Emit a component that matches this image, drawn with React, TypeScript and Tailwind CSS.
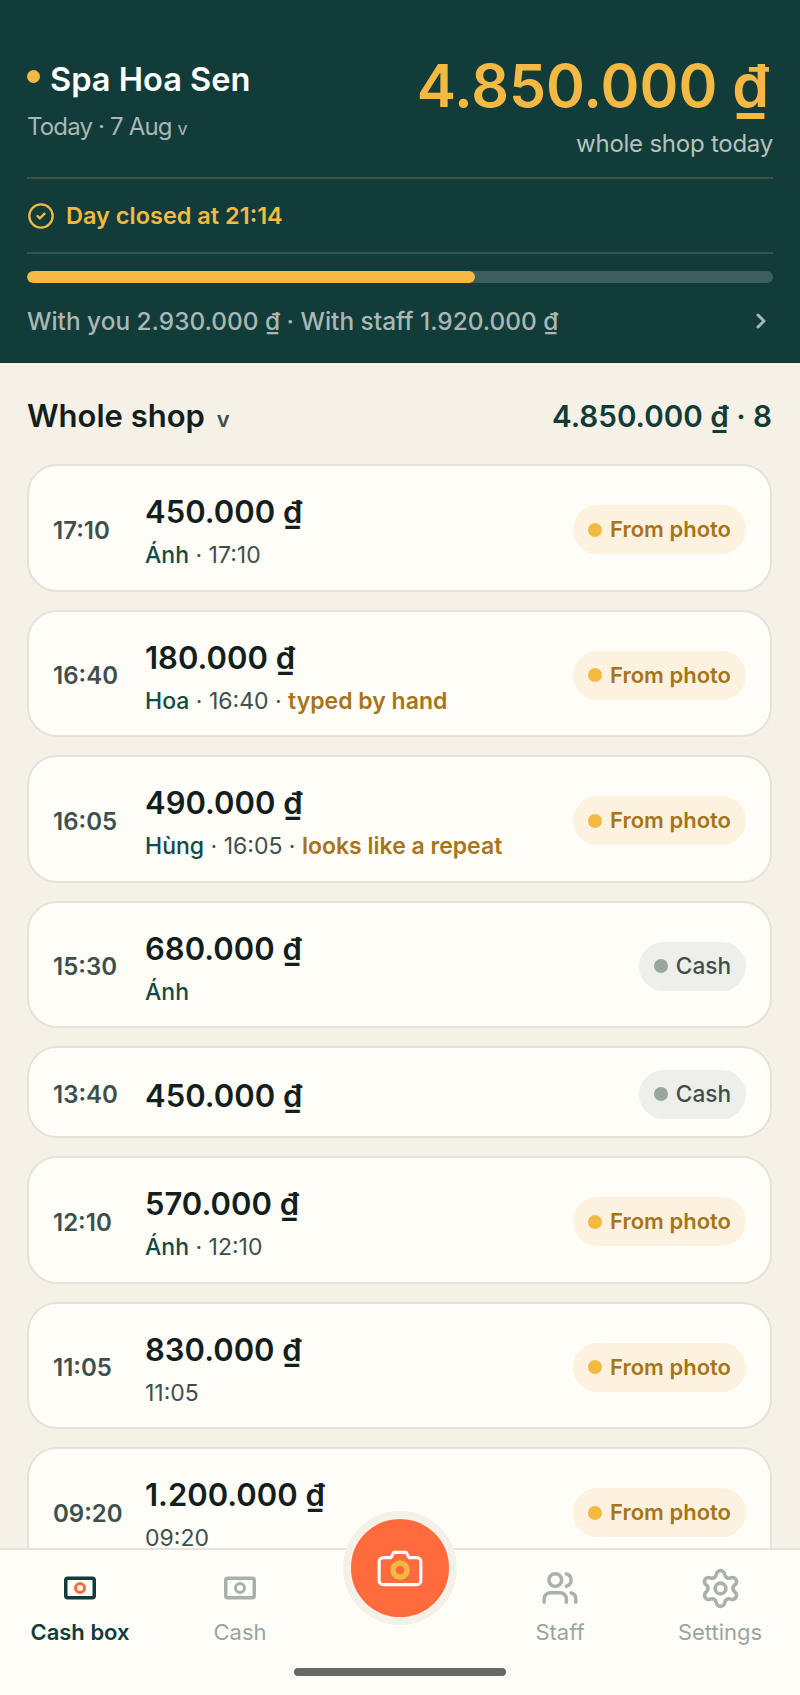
import { ChevronRight, Settings, Users, CircleCheck } from "lucide-react";

interface Sale {
  time: string;
  amount: string;
  who?: string;
  at?: string;
  note?: string;
  kind: "photo" | "cash";
}

const SALES: Sale[] = [
  { time: "17:10", amount: "450.000", who: "Ánh", at: "17:10", kind: "photo" },
  { time: "16:40", amount: "180.000", who: "Hoa", at: "16:40", note: "typed by hand", kind: "photo" },
  { time: "16:05", amount: "490.000", who: "Hùng", at: "16:05", note: "looks like a repeat", kind: "photo" },
  { time: "15:30", amount: "680.000", who: "Ánh", kind: "cash" },
  { time: "13:40", amount: "450.000", kind: "cash" },
  { time: "12:10", amount: "570.000", who: "Ánh", at: "12:10", kind: "photo" },
  { time: "11:05", amount: "830.000", at: "11:05", kind: "photo" },
  { time: "09:20", amount: "1.200.000", at: "09:20", kind: "photo" },
];

function Pill({ kind }: { kind: Sale["kind"] }) {
  if (kind === "cash") {
    return (
      <span className="mt-[4px] flex h-[49px] items-center gap-[8px] rounded-full bg-[#eeeeea] px-[15px] text-[22.6px] font-medium text-[#3e4f4c]">
        <span className="h-[14px] w-[14px] rounded-full bg-[#99a5a1]" />
        Cash
      </span>
    );
  }
  return (
    <span className="mt-[4px] flex h-[49px] items-center gap-[8px] rounded-full bg-[#fdf2df] px-[15px] text-[22px] font-semibold text-[#a8741a]">
      <span className="h-[14px] w-[14px] rounded-full bg-[#f4b942]" />
      From photo
    </span>
  );
}

function SaleCard({ sale }: { sale: Sale }) {
  const hasSub = sale.who || sale.at;
  return (
    <div
      className={`flex shrink-0 items-center justify-between rounded-[30px] border-2 border-[#e4e2da] bg-[#fffdf8] px-[24px] ${
        hasSub ? "h-[127.5px]" : "h-[92px]"
      }`}
    >
      <div className="flex items-center">
        <span className="w-[92px] pt-[6px] text-[24px] font-semibold text-[#3e4f4c]">{sale.time}</span>
        <div className="flex flex-col pt-[8px]">
          <span className="text-[31px] font-semibold leading-[40px] text-[#141e1c]">{sale.amount} ₫</span>
          {hasSub && (
            <span className="mt-[7px] text-[23px] leading-[32px] text-[#3e4f4c]">
              {sale.who && <span className="font-medium text-[#134a45]">{sale.who}</span>}
              {sale.who && sale.at && " · "}
              {sale.at}
              {sale.note && " · "}
              {sale.note && <span className="font-semibold text-[#a8741a]">{sale.note}</span>}
            </span>
          )}
        </div>
      </div>
      <Pill kind={sale.kind} />
    </div>
  );
}

function NoteIcon({ lens, line }: { lens: string; line: string }) {
  return (
    <svg width="36" height="26" viewBox="0 0 36 26" fill="none">
      <rect x="3.75" y="3.25" width="28.5" height="19.5" rx="2" stroke={line} strokeWidth="3.5" />
      <circle cx="18" cy="13" r="4.5" stroke={lens} strokeWidth="3" />
    </svg>
  );
}

function Tab({ label, active, children }: { label: string; active?: boolean; children: React.ReactNode }) {
  return (
    <div className="flex flex-1 flex-col items-center">
      <div className="flex h-[40px] items-center justify-center">{children}</div>
      <span
        className={`mt-[9px] text-[22px] leading-[30px] ${
          active ? "font-semibold text-[#123c3a]" : "text-[#9aa5a1]"
        }`}
      >
        {label}
      </span>
    </div>
  );
}

export default function App() {
  return (
    <div className="relative flex h-[1695px] w-[800px] flex-col overflow-hidden bg-[#f6f1e7] font-['Inter',sans-serif]">
      <header className="shrink-0 bg-[#123c3a] pl-[27px] pr-[27px] pt-[52px]">
        <div className="flex items-start justify-between">
          <div>
            <div className="flex items-center gap-[10px] pt-[7px]">
              <span className="mb-[6px] h-[13px] w-[13px] rounded-full bg-[#f4b942]" />
              <span className="text-[32.6px] font-semibold leading-[40px] text-white">Spa Hoa Sen</span>
            </div>
            <div className="mt-[11px] text-[24px] leading-[34px] tracking-[-0.035em] text-[#a9b8b4]">
              Today · 7 Aug <span className="text-[18px]">v</span>
            </div>
          </div>
          <div className="text-right">
            <div className="mr-[4px] text-[59px] font-semibold leading-[68px] text-[#f4b942]">4.850.000 ₫</div>
            <div className="mt-[7px] text-[24px] leading-[34px] tracking-[-0.01em] text-[#b5c3bf]">
              whole shop today
            </div>
          </div>
        </div>
        <div className="mt-[16px] h-[2px] bg-[#45533a]" />
        <div className="flex h-[73px] items-center gap-[11px] text-[23.5px] font-semibold text-[#f4b942]">
          <CircleCheck size={28} strokeWidth={2} />
          Day closed at 21:14
        </div>
        <div className="h-[2px] bg-[#325550]" />
        <div className="mt-[17px] h-[12px] overflow-hidden rounded-full bg-[#3c5f5b]">
          <div className="h-full w-[60.1%] rounded-full bg-[#f4b942]" />
        </div>
        <div className="flex h-[80px] items-center justify-between pb-[4px] text-[24.4px] font-medium text-[#a9b8b4]">
          <span>With you 2.930.000 ₫ · With staff 1.920.000 ₫</span>
          <ChevronRight size={24} strokeWidth={3} />
        </div>
      </header>

      <div className="flex min-h-0 flex-1 flex-col pl-[27px] pr-[28px]">
        <div className="flex h-[101px] shrink-0 items-center justify-between pt-[6px]">
          <div className="text-[31px] font-semibold text-[#141e1c]">
            Whole shop <span className="ml-[4px] text-[22px] text-[#3e4f4c]">v</span>
          </div>
          <div className="text-[29.6px] font-semibold text-[#123c3a]">4.850.000 ₫ · 8</div>
        </div>
        <div className="flex flex-col gap-[18px]">
          {SALES.map((sale) => (
            <SaleCard key={sale.time} sale={sale} />
          ))}
        </div>
      </div>

      <nav className="relative flex h-[147px] shrink-0 border-t-2 border-[#e4e2da] bg-[#fffdf8] pt-[18px]">
        <Tab label="Cash box" active>
          <NoteIcon lens="#ff6b3d" line="#123c3a" />
        </Tab>
        <Tab label="Cash">
          <NoteIcon lens="#a9b1ad" line="#a9b1ad" />
        </Tab>
        <div className="flex-1" />
        <Tab label="Staff">
          <Users size={38} strokeWidth={2.2} className="text-[#a9b1ad]" />
        </Tab>
        <Tab label="Settings">
          <Settings size={43} strokeWidth={2} className="text-[#a9b1ad]" />
        </Tab>
        <div className="absolute bottom-[19px] left-[294px] h-[8px] w-[212px] rounded-full bg-[#666662]" />
        <div className="absolute left-[343px] top-[-39px] flex h-[114px] w-[114px] items-center justify-center rounded-full border-[8px] border-[#f5f1e8] bg-[#ff6b3d]">
          <svg width="50" height="50" viewBox="0 0 24 24" fill="none">
            <path
              d="M9 4.5h6l1.3 2.5H20a2 2 0 0 1 2 2v9a2 2 0 0 1-2 2H4a2 2 0 0 1-2-2V9a2 2 0 0 1 2-2h3.7z"
              stroke="#fff"
              strokeWidth="1.5"
              strokeLinejoin="round"
            />
            <circle cx="12" cy="13" r="3.4" stroke="#f4b942" strokeWidth="2.6" />
          </svg>
        </div>
      </nav>
    </div>
  );
}
